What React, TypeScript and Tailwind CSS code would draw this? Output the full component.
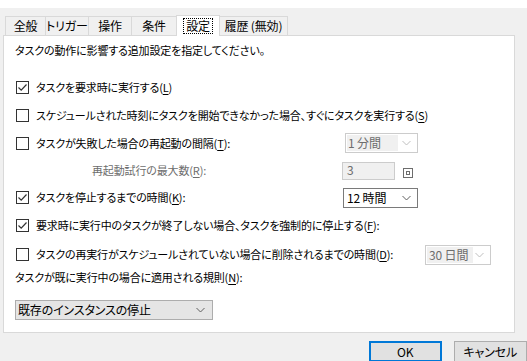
import type { ReactNode } from 'react';

const font = { fontFamily: '"Noto Sans CJK JP", "Noto Sans", sans-serif' };

const Chevron = ({ color = '#606060' }: { color?: string }) => (
  <svg width="9" height="6" viewBox="0 0 9 6" className="shrink-0">
    <path d="M0.5 1 L4.5 5 L8.5 1" fill="none" stroke={color} strokeWidth="1" />
  </svg>
);

const Check = ({ checked }: { checked?: boolean }) => (
  <div className="w-[13px] h-[13px] shrink-0 border border-[#333333] bg-white flex items-center justify-center">
    {checked && (
      <svg width="11" height="11" viewBox="0 0 11 11">
        <path d="M1.5 5.5 L4.2 8.2 L9.5 2.5" fill="none" stroke="#333333" strokeWidth="1.2" />
      </svg>
    )}
  </div>
);

// label with underlined access key, e.g. (L)
const Label = ({ text, k, tail = '' }: { text: string; k: string; tail?: string }) => (
  <span className="whitespace-nowrap">
    {text}(<span className="underline underline-offset-2">{k}</span>){tail}
  </span>
);

const CheckRow = ({ checked, children, w }: { checked?: boolean; children: ReactNode; w?: string }) => (
  <div className={`flex items-center gap-[7px] shrink-0 ${w ?? ''}`}>
    <Check checked={checked} />
    {children}
  </div>
);

const tabs = ['全般', 'トリガー', '操作', '条件', '設定', '履歴 (無効)'];
const tabW = ['w-[41px]', 'w-[44px]', 'w-[44px]', 'w-[46px]', 'w-[44px]', 'w-[69px]'];

export default function App() {
  return (
    <div
      className="w-[527px] h-[361px] bg-[#f0f0f0] overflow-hidden text-[11px] tracking-[-0.15px] text-black [font-feature-settings:'palt']"
      style={font}
    >
      <div className="h-[8px] bg-white" />

      {/* tabs */}
      <div className="flex items-end h-[27px] pl-[5px]">
        {tabs.map((t, i) =>
          i === 4 ? (
            <div
              key={t}
              className={`${tabW[i]} h-[21px] -mb-px -ml-px relative z-10 bg-white border border-b-0 border-[#d9d9d9] flex items-center justify-center whitespace-nowrap text-[12px]`}
            >
              <span className="px-[2px] leading-[14px] outline outline-1 outline-dotted outline-black">{t}</span>
            </div>
          ) : (
            <div
              key={t}
              className={`${tabW[i]} h-[19px] bg-[#f0f0f0] border border-b-0 border-[#d9d9d9] -ml-px first:ml-0 flex items-center justify-center whitespace-nowrap text-[12px]`}
            >
              {t}
            </div>
          )
        )}
      </div>

      {/* panel */}
      <div className="ml-[3px] w-[512px] h-[298px] bg-white border border-[#d9d9d9] flex flex-col pl-[12px]">
        <div className="mt-[4px] h-[20px] flex items-center -ml-[1px]">
          タスクの動作に影響する追加設定を指定してください。
        </div>

        <div className="mt-[13px] h-[28px] flex items-center">
          <CheckRow checked>
            <Label text="タスクを要求時に実行する" k="L" />
          </CheckRow>
        </div>

        <div className="h-[28px] flex items-center">
          <CheckRow>
            <Label text="スケジュールされた時刻にタスクを開始できなかった場合、すぐにタスクを実行する" k="S" />
          </CheckRow>
        </div>

        <div className="h-[28px] flex items-center">
          <CheckRow w="w-[329px]">
            <Label text="タスクが失敗した場合の再起動の間隔" k="T" tail=":" />
          </CheckRow>
          <div className="w-[73px] h-[20px] border border-[#cccccc] bg-white flex items-center pl-[1px] pr-[6px] text-[12px]">
            <div className="w-[51px] h-[16px] bg-[#f0f0f0] text-[#6d6d6d] flex items-center pl-[1px] leading-none">1 分間</div>
            <div className="ml-auto">
              <Chevron color="#bfbfbf" />
            </div>
          </div>
        </div>

        <div className="h-[27px] flex items-center">
          <div className="w-[326px] pl-[76px] text-[#6d6d6d]">
            <Label text="再起動試行の最大数" k="R" tail=":" />
          </div>
          <div className="w-[53px] h-[18px] border border-[#cccccc] bg-[#f0f0f0] text-[#6d6d6d] pl-[4px] leading-[14px] text-[12px]">3</div>
          <div className="ml-[8px] mt-[5px] w-[10px] h-[10px] border border-[#6d6d6d] flex items-center justify-center">
            <div className="w-[4px] h-[4px] border border-[#6d6d6d]" />
          </div>
        </div>

        <div className="h-[27px] flex items-center">
          <CheckRow checked w="w-[327px]">
            <Label text="タスクを停止するまでの時間" k="K" tail=":" />
          </CheckRow>
          <div className="w-[75px] h-[20px] border border-[#7a7a7a] bg-white flex items-center pl-[3px] pr-[6px] text-[12px]">
            <span className="leading-none">12 時間</span>
            <div className="ml-auto">
              <Chevron />
            </div>
          </div>
        </div>

        <div className="h-[29px] flex items-center">
          <CheckRow checked>
            <Label text="要求時に実行中のタスクが終了しない場合、タスクを強制的に停止する" k="F" tail=":" />
          </CheckRow>
        </div>

        <div className="h-[29px] flex items-center">
          <CheckRow w="w-[409px]">
            <Label text="タスクの再実行がスケジュールされていない場合に削除されるまでの時間" k="D" tail=":" />
          </CheckRow>
          <div className="w-[66px] h-[20px] border border-[#cccccc] bg-white flex items-center pl-[1px] pr-[6px] text-[12px]">
            <div className="w-[46px] h-[16px] bg-[#f0f0f0] text-[#6d6d6d] flex items-center pl-[2px] leading-none whitespace-nowrap">30 日間</div>
            <div className="ml-auto">
              <Chevron color="#bfbfbf" />
            </div>
          </div>
        </div>

        <div className="h-[17px] flex items-center -ml-[1px]">
          <Label text="タスクが既に実行中の場合に適用される規則" k="N" tail=":" />
        </div>

        <div className="mt-[14px] -ml-[1px] w-[198px] h-[20px] border border-[#adadad] bg-[#e5e5e5] flex items-center pl-[2px] pr-[7px] text-[12px]">
          <span className="leading-none">既存のインスタンスの停止</span>
          <div className="ml-auto">
            <Chevron />
          </div>
        </div>
      </div>

      {/* buttons */}
      <div className="flex mt-[8px] pl-[369px] gap-[12px] text-[12px]">
        <button className="w-[73px] h-[21px] border-2 border-[#0078d7] bg-[#e1e1e1] flex items-center justify-center leading-none">
          OK
        </button>
        <button className="w-[74px] h-[21px] border border-[#adadad] bg-[#e1e1e1] flex items-center justify-center leading-none">
          キャンセル
        </button>
      </div>
    </div>
  );
}
